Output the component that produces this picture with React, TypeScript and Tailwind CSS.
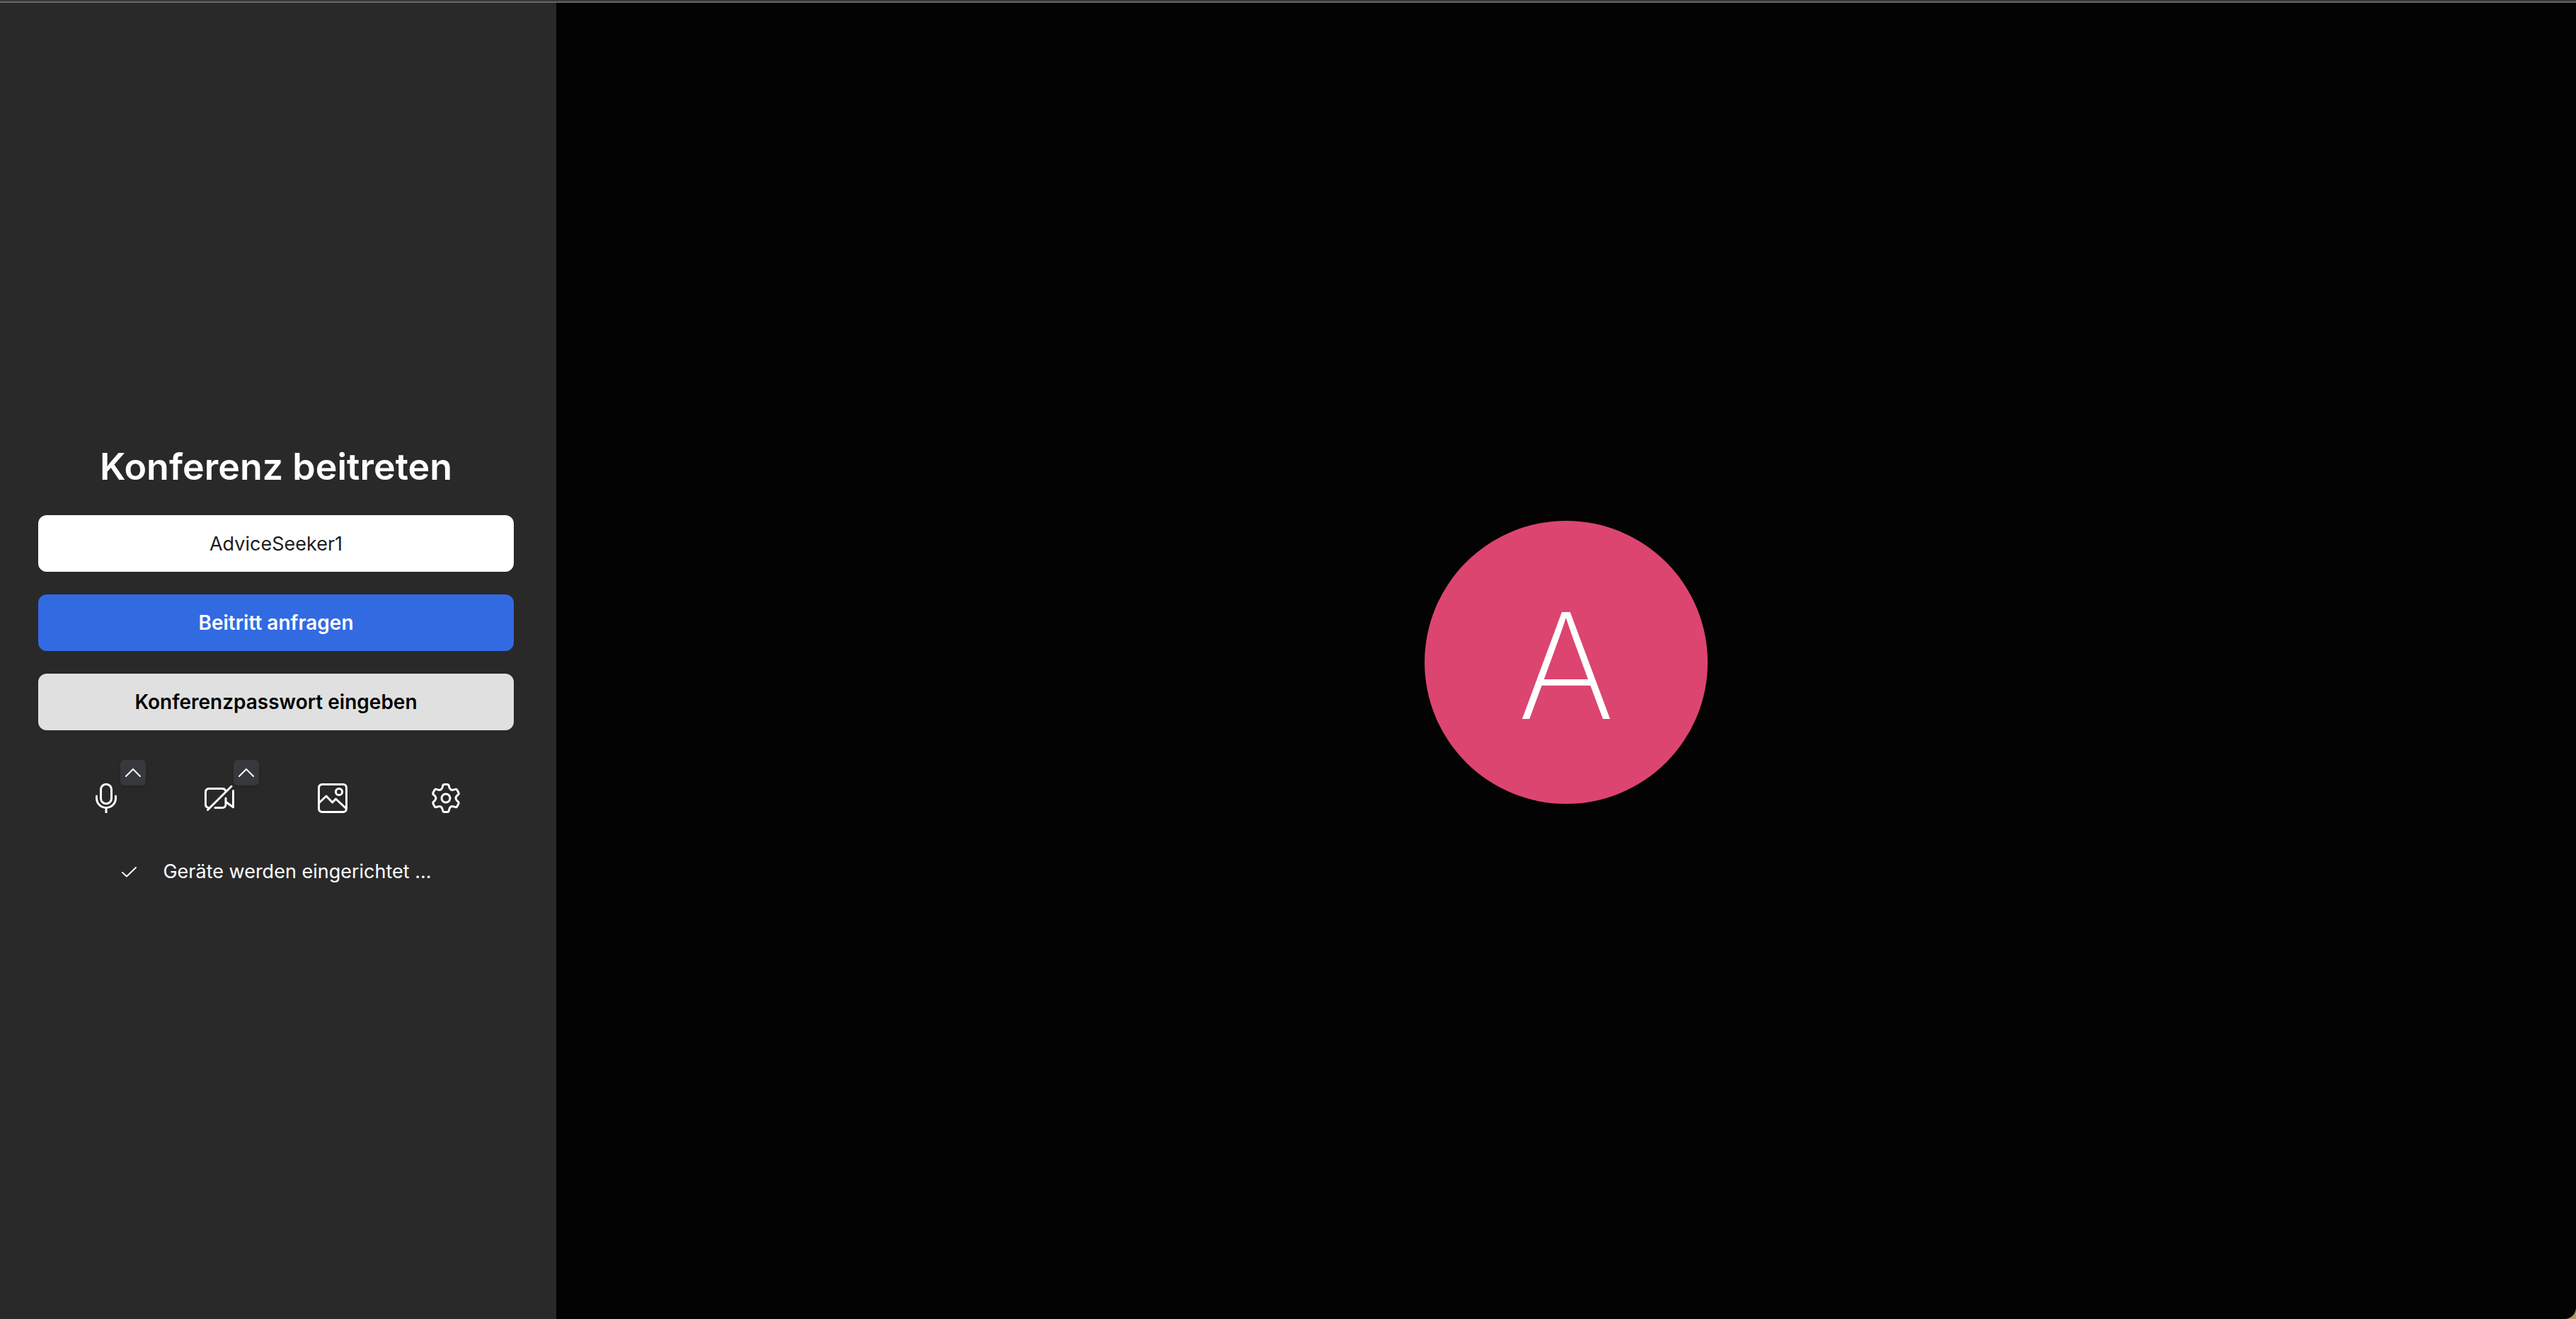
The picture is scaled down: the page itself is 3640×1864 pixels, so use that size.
import type { ReactNode } from "react";

function Icon({ children }: { children: ReactNode }) {
  return (
    <svg
      className="size-12"
      viewBox="0 0 48 48"
      fill="none"
      stroke="currentColor"
      strokeWidth="3"
      strokeLinecap="round"
      strokeLinejoin="round"
      aria-hidden="true"
    >
      {children}
    </svg>
  );
}

const rotate = (x: number, y: number, deg: number) => {
  const a = (deg * Math.PI) / 180;
  const px = 24 + x * Math.cos(a) - y * Math.sin(a);
  const py = 24 + x * Math.sin(a) + y * Math.cos(a);
  return `${px.toFixed(2)} ${py.toFixed(2)}`;
};

// One tooth flank and the valley after it, repeated six times around the centre.
const gearPath =
  [0, 60, 120, 180, 240, 300]
    .map((d, i) => {
      const p = (x: number, y: number) => rotate(x, y, d);
      const n = (x: number, y: number) => rotate(-x, y, d + 60);
      return [
        i === 0 ? `M${p(-2.2, -19.5)}` : "",
        `L${p(2.2, -19.5)}`,
        `Q${p(3.8, -19.5)} ${p(4.2, -18)}`,
        `L${p(4.8, -15.5)}`,
        `C${p(5.6, -12.3)} ${n(5.6, -12.3)} ${n(4.8, -15.5)}`,
        `L${n(4.2, -18)}`,
        `Q${n(3.8, -19.5)} ${n(2.2, -19.5)}`,
      ].join("");
    })
    .join("") + "Z";

function MicIcon() {
  return (
    <Icon>
      <rect x="16.5" y="4.2" width="15" height="27.6" rx="7.5" />
      <path d="M10.5 21v3a13.5 13.5 0 0 0 27 0v-3" />
      <path d="M24 38v7" strokeLinecap="butt" />
    </Icon>
  );
}

function CameraOffIcon() {
  return (
    <Icon>
      <path d="M8 37.4A4.5 4.5 0 0 1 4.5 33V15A4.5 4.5 0 0 1 9 10.5h19.500a4.5 4.5 0 0 1 4 2.500" />
      <path d="M18 37.5h10.5A4.5 4.5 0 0 0 33 33v-9" />
      <path d="M43.5 13.5V36.800L33.5 29.500" />
      <path d="M7.5 40.5L41 7.3" />
    </Icon>
  );
}

function ImageIcon() {
  return (
    <Icon>
      <rect x="4.5" y="4.5" width="39" height="39" rx="4.5" />
      <circle cx="33" cy="15" r="4.6" />
      <path d="M5 30.5L15 21l8.7 9 4.8-5L43 38.5" />
    </Icon>
  );
}

function GearIcon() {
  return (
    <Icon>
      <path d={gearPath} />
      <circle cx="24" cy="24" r="6" />
    </Icon>
  );
}

function DeviceButton({
  label,
  menuLabel,
  children,
}: {
  label: string;
  menuLabel?: string;
  children: ReactNode;
}) {
  return (
    <div className="relative">
      <button type="button" aria-label={label} className="flex size-24 items-center justify-center">
        {children}
      </button>
      {menuLabel && (
        <button
          type="button"
          aria-label={menuLabel}
          className="absolute -top-1.5 -right-2 flex size-9 items-center justify-center rounded-md bg-[#37383c] shadow-md"
        >
          <svg
            className="h-3 w-6"
            viewBox="0 0 24 12"
            fill="none"
            stroke="currentColor"
            strokeWidth="2"
            strokeLinecap="round"
            strokeLinejoin="round"
            aria-hidden="true"
          >
            <path d="M2 11L12 1l10 10" />
          </svg>
        </button>
      )}
    </div>
  );
}

export default function App() {
  return (
    <div className="flex min-h-screen flex-col bg-[#292929] font-['Inter',sans-serif] text-white">
      <header className="h-1 border-b-2 border-[#666666] bg-[#3a3a3a]" />
      <div className="flex grow bg-[#b09668]">
        <aside className="flex w-[786px] shrink-0 flex-col justify-center bg-[#292929] pt-3 pr-[60px] pl-[54px]">
          <form className="flex flex-col gap-8 text-[28px] leading-10" onSubmit={(e) => e.preventDefault()}>
            <h1 className="text-center text-[52px] leading-[72px] font-semibold">Konferenz beitreten</h1>
            <input
              type="text"
              aria-label="Name"
              defaultValue="AdviceSeeker1"
              className="h-20 w-full rounded-xl bg-white text-center text-[27px] text-[#1b1c22]"
            />
            <button type="submit" className="h-20 rounded-xl bg-[#326ae2] font-semibold">
              Beitritt anfragen
            </button>
            <button type="button" className="h-20 rounded-xl bg-[#e0e0e0] font-semibold text-black">
              Konferenzpasswort eingeben
            </button>
          </form>
          <div className="mt-12 flex justify-center gap-16">
            <DeviceButton label="Mikrofon" menuLabel="Mikrofon auswählen">
              <MicIcon />
            </DeviceButton>
            <DeviceButton label="Kamera" menuLabel="Kamera auswählen">
              <CameraOffIcon />
            </DeviceButton>
            <DeviceButton label="Hintergrund">
              <ImageIcon />
            </DeviceButton>
            <DeviceButton label="Einstellungen">
              <GearIcon />
            </DeviceButton>
          </div>
          <div className="mt-8 flex items-center justify-center gap-9 text-[27px] leading-[48px]">
            <svg
              className="size-6"
              viewBox="0 0 24 24"
              fill="none"
              stroke="currentColor"
              strokeWidth="2"
              strokeLinecap="round"
              strokeLinejoin="round"
              aria-hidden="true"
            >
              <path d="M3 13l6 5.5L22 6" />
            </svg>
            <p>Geräte werden eingerichtet ...</p>
          </div>
        </aside>
        <main className="flex grow items-center justify-center rounded-br-2xl bg-[#030303] pt-1">
          <div className="flex size-[400px] items-center justify-center rounded-full bg-[#dc4570] pt-2 text-[208px] leading-none font-[150]">
            A
          </div>
        </main>
      </div>
    </div>
  );
}
